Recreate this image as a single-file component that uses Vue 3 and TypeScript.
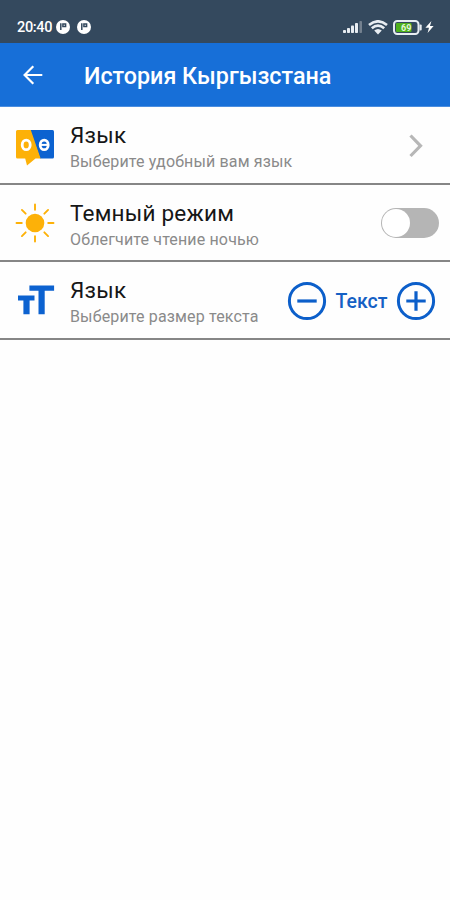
<script setup lang="ts">
import { ref } from 'vue'

const darkMode = ref(false)
const signalBars = [
  { x: 0, h: 3 },
  { x: 4, h: 5 },
  { x: 8, h: 7.5 },
  { x: 12, h: 10 },
]
const rays = [0, 45, 90, 135, 180, 225, 270, 315]
</script>

<template>
  <div class="screen">
    <header class="status">
      <div class="status-left">
        <span class="clock">20:40</span>
        <svg v-for="n in 2" :key="n" class="app-dot" viewBox="0 0 14 14">
          <circle cx="7" cy="7" r="7" fill="#fff" />
          <path d="M4.8 3.2v6.8M6.9 7.2V4H9.6V6.4H7" fill="none" stroke="#34495e" stroke-width="1.5" />
        </svg>
      </div>
      <div class="status-right">
        <svg class="signal" viewBox="0 0 20 13">
          <rect v-for="b in signalBars" :key="b.x" :x="b.x" :y="12 - b.h" width="3" :height="b.h" rx="0.8" fill="#e8edf2" />
          <rect x="16.4" y="0" width="2.6" height="12" rx="0.8" fill="#74818f" />
        </svg>
        <svg class="wifi" viewBox="0 0 20 15">
          <g fill="none" stroke="#e8edf2" stroke-width="2.6">
            <path d="M1 5Q10-2.4 19 5" />
            <path d="M3.8 8.3Q10 3 16.2 8.3" />
          </g>
          <path d="M6.2 10.6Q10 7.2 13.8 10.6L10 14.6z" fill="#e8edf2" />
        </svg>
        <svg class="battery" viewBox="0 0 29 15">
          <rect x="1" y="1" width="24.5" height="13" rx="3.2" fill="#34495e" stroke="#e8edf2" stroke-width="2" />
          <rect x="26.5" y="4.5" width="2.2" height="6" rx="1" fill="#e8edf2" />
          <rect x="3" y="3" width="15.5" height="9" rx="1" fill="#4fb01c" />
          <text x="13.2" y="10.7" text-anchor="middle" class="charge">69</text>
        </svg>
        <svg class="bolt" viewBox="0 0 9 12">
          <path d="M6.4 0L0.4 6.8H4L2.6 12L8.6 5H5z" fill="#fff" />
        </svg>
      </div>
    </header>

    <nav class="bar">
      <svg class="back" viewBox="0 0 20 20">
        <path d="M19.3 10H2M10.3 1.3L1.6 10L10.3 18.7" fill="none" stroke="#fff" stroke-width="2.2" />
      </svg>
      <h1>История Кыргызстана</h1>
    </nav>

    <main>
      <section class="row">
        <svg class="icon" viewBox="0 0 40 40">
          <path d="M15 4H37.5Q39 4 39 5.500V31Q39 32.500 37.500 32.500H25z" fill="#0c62d0" />
          <path d="M2.500 4H15.800L25.600 32.500H20.500L12 39.500L10.200 32.500H2.500Q1 32.500 1 31V5.500Q1 4 2.500 4z" fill="#fdb108" />
          <ellipse cx="11.200" cy="18.900" rx="4" ry="4.800" fill="none" stroke="#fff" stroke-width="2.800" />
          <ellipse cx="29.200" cy="18.900" rx="4" ry="4.800" fill="none" stroke="#fff" stroke-width="2.800" />
          <path d="M25.500 18.900H33" stroke="#fff" stroke-width="2" />
        </svg>
        <div class="copy">
          <h2>Язык</h2>
          <p>Выберите удобный вам язык</p>
        </div>
        <svg class="chevron" viewBox="0 0 14 24">
          <path d="M1.500 1.500L11.500 11.800L1.500 22" fill="none" stroke="#b7b7b7" stroke-width="3.200" />
        </svg>
      </section>

      <section class="row">
        <svg class="icon" viewBox="0 0 40 40">
          <circle cx="20" cy="20" r="9.300" fill="#fdb108" />
          <path v-for="a in rays" :key="a" d="M20 1.500V6.800" :transform="`rotate(${a} 20 20)`" stroke="#fdb108" stroke-width="1.900" stroke-linecap="round" />
        </svg>
        <div class="copy">
          <h2>Темный режим</h2>
          <p>Облегчите чтение ночью</p>
        </div>
        <button class="toggle" :class="{ on: darkMode }" role="switch" :aria-checked="darkMode" @click="darkMode = !darkMode">
          <span class="knob"></span>
        </button>
      </section>

      <section class="row">
        <svg class="icon" viewBox="0 0 40 40">
          <path d="M14.400 4.500H39.100V9.700H29.700V33.200H23.500V9.700H14.400z" fill="#0c62d0" />
          <path d="M3 14.500H19.500V19.500H14.600V33.200H8.400V19.500H3z" fill="#0c62d0" />
        </svg>
        <div class="copy">
          <h2>Язык</h2>
          <p>Выберите размер текста</p>
        </div>
        <div class="sizer">
          <svg class="round" viewBox="0 0 40 40">
            <circle cx="20" cy="20" r="17.600" fill="none" stroke="#0c5fca" stroke-width="3" />
            <path d="M10.300 20H29.700" stroke="#0c5fca" stroke-width="3.200" />
          </svg>
          <span class="label">Текст</span>
          <svg class="round" viewBox="0 0 40 40">
            <circle cx="20" cy="20" r="17.600" fill="none" stroke="#0c5fca" stroke-width="3" />
            <path d="M10.300 20H29.700M20 10.300V29.700" stroke="#0c5fca" stroke-width="3.200" />
          </svg>
        </div>
      </section>
    </main>
  </div>
</template>

<style>
body {
  margin: 0;
  background: #fefefe;
}
</style>

<style scoped>
.screen {
  width: 450px;
  height: 900px;
  overflow: hidden;
  background: #fefefe;
  font-family: Roboto, "Liberation Sans", sans-serif;
}
svg {
  display: block;
  flex: none;
}
.status {
  box-sizing: border-box;
  height: 42.500px;
  padding: 12px 16px 0 17px;
  display: flex;
  align-items: center;
  justify-content: space-between;
  background: #34495e;
}
.status-left,
.status-right {
  display: flex;
  align-items: center;
}
.clock {
  width: 39px;
  padding-top: 2px;
  font-size: 14.500px;
  font-weight: 500;
  line-height: 16px;
  letter-spacing: -0.350px;
  color: #fff;
  white-space: nowrap;
}
.app-dot {
  width: 14px;
  height: 14px;
  margin-right: 7px;
}
.signal {
  width: 20px;
  height: 13px;
  margin-top: 1px;
}
.wifi {
  width: 20px;
  height: 15px;
  margin-left: 5px;
}
.battery {
  width: 29px;
  height: 15px;
  margin-left: 5px;
}
.charge {
  font-size: 9px;
  font-weight: 700;
  fill: #e4f6da;
}
.bolt {
  width: 9px;
  height: 12px;
  margin-left: 3px;
}
.bar {
  box-sizing: border-box;
  height: 64.500px;
  padding-left: 23px;
  display: flex;
  align-items: center;
  background: #176fd8;
  border-bottom: 1px solid #4b8ee0;
}
.back {
  width: 20px;
  height: 20px;
  margin-top: 1px;
}
h1 {
  margin: 3px 0 0 41px;
  font-size: 23.300px;
  font-weight: 500;
  line-height: 28px;
  color: #fff;
  white-space: nowrap;
}
.row {
  box-sizing: border-box;
  height: 77.500px;
  padding: 1.500px 0 0 15px;
  display: flex;
  align-items: center;
  border-bottom: 2px solid #868686;
}
.icon {
  width: 40px;
  height: 40px;
}
.copy {
  flex: 1;
  margin-left: 15px;
  padding-top: 3px;
  white-space: nowrap;
}
h2 {
  margin: 0;
  font-size: 22.500px;
  font-weight: 400;
  line-height: 28px;
  letter-spacing: 0.220px;
  color: #161616;
}
p {
  margin: 2px 0 0;
  font-size: 16px;
  font-weight: 400;
  line-height: 22px;
  letter-spacing: 0.150px;
  color: #8a8a8a;
}
.chevron {
  width: 14px;
  height: 24px;
  margin-right: 27px;
}
.toggle {
  box-sizing: border-box;
  width: 58px;
  height: 30px;
  margin-right: 11px;
  padding: 1px;
  display: flex;
  border: 0;
  border-radius: 15px;
  background: #b5b5b5;
}
.toggle.on {
  justify-content: flex-end;
  background: #176fd8;
}
.knob {
  width: 28px;
  height: 28px;
  border-radius: 50%;
  background: #fff;
}
.sizer {
  display: flex;
  align-items: center;
  margin-right: 14px;
}
.round {
  width: 40px;
  height: 40px;
}
.label {
  width: 69px;
  padding-top: 2px;
  text-align: center;
  font-size: 19.500px;
  font-weight: 500;
  color: #1560c4;
}
</style>
